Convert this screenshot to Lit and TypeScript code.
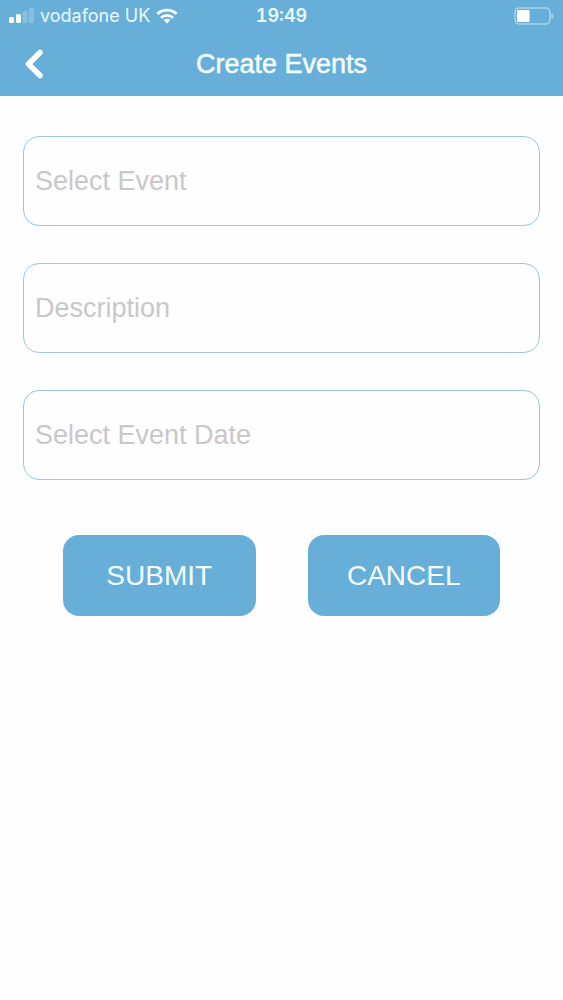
import { LitElement, html, css } from "lit";
import { customElement, property } from "lit/decorators.js";

@customElement("status-bar")
class StatusBar extends LitElement {
  @property() carrier = "";
  @property() time = "";

  static styles = css`
    :host {
      display: grid;
      grid-template-columns: 1fr auto 1fr;
      align-items: center;
      height: 32px;
      padding: 0 9px;
      color: #eaf8fe;
      font: 18px/24px Inter, "Liberation Sans", sans-serif;
    }
    .network {
      display: flex;
      align-items: center;
      gap: 6px;
      white-space: nowrap;
    }
    .time {
      font-weight: 600;
      font-variant-numeric: tabular-nums;
    }
    .battery {
      justify-self: end;
    }
    svg {
      display: block;
    }
  `;

  render() {
    return html`
      <div class="network">
        <svg width="25" height="16" viewBox="0 0 25 16" fill="#fff" aria-hidden="true">
          <rect x="0" y="9" width="5" height="6" rx="1.5" />
          <rect x="7" y="6" width="5" height="9" rx="1.5" />
          <rect x="13.500" y="3" width="5" height="12" rx="1.5" opacity=".22" />
          <rect x="20" y="0" width="5" height="15" rx="1.5" opacity=".22" />
        </svg>
        <span>${this.carrier}</span>
        <svg width="22" height="16" viewBox="0 0 23 16" fill="none" stroke="#fff" stroke-width="3" aria-hidden="true">
          <path d="M1.500 5.800C7.200.6 15.800.6 21.500 5.800" />
          <path d="M5.200 9.800C8.800 6.600 14.200 6.600 17.800 9.800" />
          <path d="M11.500 15.800 7.900 12.200C10 10.500 13 10.500 15.100 12.200Z" fill="#fff" stroke="none" />
        </svg>
      </div>
      <span class="time">${this.time}</span>
      <svg class="battery" width="40" height="18" viewBox="0 0 40 18" aria-hidden="true">
        <rect x="1" y="1" width="35" height="16" rx="4" fill="none" stroke="#a9d7ee" stroke-width="1.500" />
        <rect x="3" y="3" width="12.500" height="12" rx="1" fill="#fff" />
        <path d="M37.500 6.200C40 7 40 11 37.500 11.800Z" fill="#a9d7ee" />
      </svg>
    `;
  }
}

@customElement("app-root")
class AppRoot extends LitElement {
  static styles = css`
    :host {
      display: block;
      min-height: 100vh;
      background: #fefefe;
      font-family: "Liberation Sans", Arial, sans-serif;
    }
    * {
      box-sizing: border-box;
    }
    .top {
      background: #67afd8;
    }
    .nav {
      display: grid;
      grid-template-columns: 68px 1fr 68px;
      align-items: center;
      height: 64px;
    }
    .back {
      display: flex;
      align-items: center;
      height: 64px;
      padding: 0 0 0 24px;
      border: 0;
      background: none;
      cursor: pointer;
    }
    .title {
      margin: 0;
      color: #f3fcff;
      font-size: 27px;
      font-weight: 400;
      line-height: 32px;
      text-align: center;
      -webkit-text-stroke: 0.02em #f3fcff;
    }
    .form {
      display: flex;
      flex-direction: column;
      gap: 37px;
      padding: 40px 23px;
    }
    .field {
      width: 100%;
      height: 90px;
      padding: 0 11px;
      border: 1px solid #9cc6e0;
      border-radius: 16px;
      background: #fefefe;
      color: #444;
      font: 27px/32px "Liberation Sans", Arial, sans-serif;
    }
    .field::placeholder {
      color: #c9c7ca;
      opacity: 1;
    }
    .actions {
      display: grid;
      grid-template-columns: 1fr 1fr;
      gap: 52px;
      padding: 18px 40px 0;
    }
    .action {
      height: 81px;
      padding: 0;
      border: 0;
      border-radius: 16px;
      background: #67afd8;
      color: #f3fcff;
      font: 28px/32px "Liberation Sans", Arial, sans-serif;
      cursor: pointer;
    }
  `;

  private fields = ["Select Event", "Description", "Select Event Date"];

  render() {
    return html`
      <header class="top">
        <status-bar carrier="vodafone UK" time="19:49"></status-bar>
        <div class="nav">
          <button class="back" type="button" aria-label="Back">
            <svg width="20" height="30" viewBox="0 0 20 30" fill="none" stroke="#fff" stroke-width="5.5" stroke-linecap="round" stroke-linejoin="round" aria-hidden="true">
              <path d="M16 3.500 4.500 15 16 26.500" />
            </svg>
          </button>
          <h1 class="title">Create Events</h1>
        </div>
      </header>
      <form class="form" @submit=${(e: Event) => e.preventDefault()}>
        ${this.fields.map(
          (label) => html`<input class="field" type="text" placeholder=${label} aria-label=${label} />`
        )}
        <div class="actions">
          <button class="action" type="submit">SUBMIT</button>
          <button class="action" type="reset">CANCEL</button>
        </div>
      </form>
    `;
  }
}
